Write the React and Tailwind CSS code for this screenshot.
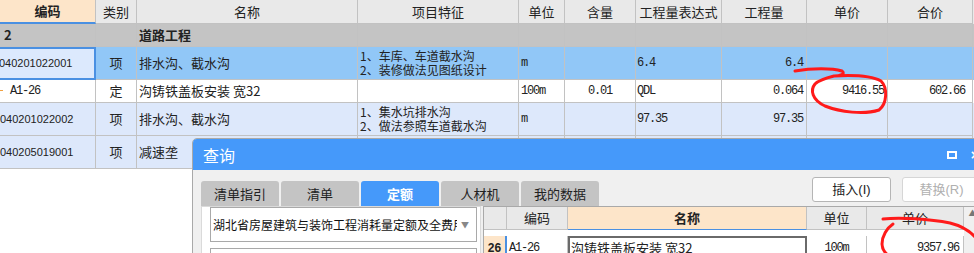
import React from 'react';

const cn = "font-['Noto_Sans_CJK_SC',sans-serif]";
const mono = "font-['Liberation_Mono',monospace] text-[12px] tracking-[-1.2px]";
const line = 'border-r border-b border-[#c2c2c2]';
const cols = 'grid grid-cols-[96px_41px_221px_161px_46px_71px_86px_85px_81px_85px]';

const Cell = ({ className = '', children }) => (
  <div className={`${line} flex items-center overflow-hidden whitespace-nowrap ${className}`}>{children}</div>
);

const headers = ['类别', '名称', '项目特征', '单位', '含量', '工程量表达式', '工程量', '单价', '合价'];

// 主表格
const MainGrid = () => (
  <div className={`${cn} text-[12px] text-[#222]`}>
    <div className={`${cols} h-[24px] bg-[#e9e9e9]`}>
      <Cell className="justify-center bg-[#fde5c9] font-bold text-[13px] border-b-2 border-b-[#4a90e2]">编码</Cell>
      {headers.map(h => (
        <Cell key={h} className="justify-center text-[13px]">{h}</Cell>
      ))}
    </div>

    <div className={`${cols} h-[23px] bg-[#c4c4c4] font-bold text-[13px]`}>
      <Cell className="pl-[4px]">2</Cell>
      <Cell />
      <Cell className="pl-[2px]">道路工程</Cell>
      <Cell /><Cell /><Cell /><Cell /><Cell /><Cell /><Cell />
    </div>

    <div className={`${cols} h-[33px] bg-[#91c7f7]`}>
      <div className="flex items-center bg-[#dce9fd] border-2 border-l-0 border-[#4a90e2] font-['Liberation_Sans',sans-serif] text-[11px] -ml-[1px]">040201022001</div>
      <Cell className="justify-center text-[13px]">项</Cell>
      <Cell className="pl-[2px] text-[13px]">排水沟、截水沟</Cell>
      <Cell className="pl-[2px] leading-[14px]">
        <div>1、车库、车道截水沟<br />2、装修做法见图纸设计</div>
      </Cell>
      <Cell className={`pl-[2px] ${mono}`}>m</Cell>
      <Cell />
      <Cell className={`pl-[1px] ${mono}`}>6.4</Cell>
      <Cell className={`justify-end pr-[3px] ${mono}`}>6.4</Cell>
      <Cell /><Cell />
    </div>

    <div className={`${cols} h-[23px] bg-white`}>
      <Cell className={`relative pl-[10px] ${mono}`}>
        <span className="absolute left-0 top-[10px] w-[3px] h-[1px] bg-[#f0a040]" />A1-26
      </Cell>
      <Cell className="justify-center text-[13px]">定</Cell>
      <Cell className="pl-[2px] text-[13px]">沟铸铁盖板安装 宽32</Cell>
      <Cell />
      <Cell className={`pl-[2px] ${mono}`}>100m</Cell>
      <Cell className={`justify-center ${mono}`}>0.01</Cell>
      <Cell className={`pl-[1px] ${mono}`}>QDL</Cell>
      <Cell className={`justify-end pr-[3px] ${mono}`}>0.064</Cell>
      <Cell className={`justify-end pr-[3px] ${mono}`}>9416.55</Cell>
      <Cell className={`justify-end pr-[7px] ${mono}`}>602.66</Cell>
    </div>

    <div className={`${cols} h-[33px] bg-[#dde8fb]`}>
      <Cell className="font-['Liberation_Sans',sans-serif] text-[11px]">040201022002</Cell>
      <Cell className="justify-center text-[13px]">项</Cell>
      <Cell className="pl-[2px] text-[13px]">排水沟、截水沟</Cell>
      <Cell className="pl-[2px] leading-[14px]">
        <div>1、集水坑排水沟<br />2、做法参照车道截水沟</div>
      </Cell>
      <Cell className={`pl-[2px] ${mono}`}>m</Cell>
      <Cell />
      <Cell className={`pl-[1px] ${mono}`}>97.35</Cell>
      <Cell className={`justify-end pr-[3px] ${mono}`}>97.35</Cell>
      <Cell /><Cell />
    </div>

    <div className={`${cols} h-[33px] bg-[#dde8fb]`}>
      <Cell className="font-['Liberation_Sans',sans-serif] text-[11px]">040205019001</Cell>
      <Cell className="justify-center text-[13px]">项</Cell>
      <Cell className="pl-[2px] text-[13px]">减速垄</Cell>
      <Cell /><Cell /><Cell /><Cell /><Cell /><Cell /><Cell />
    </div>
  </div>
);

const tabs = ['清单指引', '清单', '定额', '人材机', '我的数据'];

// 查询窗口
const QueryDialog = () => (
  <div className={`absolute left-[192px] top-[138px] w-[800px] h-[130px] border border-[#a9a9a9] rounded-tl-[5px] bg-[#f0f0f0] overflow-hidden ${cn}`}>
    <div className="h-[31px] bg-[#4599fa] flex items-center pl-[10px] text-white text-[16px]">
      <span>查询</span>
      <span className="ml-auto w-[10px] h-[8px] border-2 border-white" />
      <span className="ml-[14px] mr-[12px] text-[14px] font-['Liberation_Sans',sans-serif] font-bold leading-none">×</span>
    </div>

    <div className="flex pl-[8px] pr-[10px] h-[36px]">
      <div className="flex gap-[2px] mt-[11px]">
        {tabs.map(t => (
          <div
            key={t}
            className={`w-[78px] h-[25px] rounded-t-[3px] flex items-center justify-center text-[13px] ${t === '定额' ? 'bg-[#4599fa] text-white font-bold' : 'bg-[#c4c4c4] text-[#222]'}`}
          >
            {t}
          </div>
        ))}
      </div>
      <div className="ml-auto mt-[7px] flex gap-[11px] font-['Liberation_Sans',sans-serif]">
        <button className="w-[79px] h-[25px] bg-white border border-[#b5b5b5] rounded-[3px] text-[13px] text-[#222]">
          <span className={cn}>插入</span>(I)
        </button>
        <button className="w-[79px] h-[25px] bg-white border border-[#d6d6d6] rounded-[3px] text-[13px] text-[#b0b0b0]">
          <span className={cn}>替换</span>(R)
        </button>
      </div>
    </div>

    <div className="flex gap-[2px] pl-[8px]">
      <div className="w-[280px] h-[60px] bg-white border border-[#dadada] pl-[8px] pr-[3px]">
        <div className="h-[35px] border border-[#a9a9a9] flex items-center pl-[2px] pr-[7px] text-[12px] text-[#111]">
          <span className="overflow-hidden whitespace-nowrap flex-1">湖北省房屋建筑与装饰工程消耗量定额及全费用基价表</span>
          <span className="ml-[4px] text-[8px] text-[#888]">▼</span>
        </div>
        <div className="mt-[6px] h-[30px] border border-[#a9a9a9]" />
      </div>

      <div className="flex border-l border-t border-[#a9a9a9] bg-white">
        <div className="grid grid-cols-[23px_61px_239px_60px_97px] text-[13px] text-[#222]">
          <div className={`${line} h-[23px] bg-[#e9e9e9]`} />
          <div className={`${line} h-[23px] bg-[#e9e9e9] flex items-center justify-center`}>编码</div>
          <div className={`${line} h-[23px] bg-[#fde5c9] flex items-center justify-center font-bold border-b-[#4a90e2]`}>名称</div>
          <div className={`${line} h-[23px] bg-[#e9e9e9] flex items-center justify-center`}>单位</div>
          <div className={`${line} h-[23px] bg-[#e9e9e9] flex items-center justify-center`}>单价</div>

          <div className="h-[24px] bg-[#fde5c9] border-r-2 border-r-[#4a90e2] border-b border-b-[#c2c2c2] flex items-center justify-center text-[12px] font-bold font-['Liberation_Sans',sans-serif]">26</div>
          <div className={`${line} h-[24px] pl-[2px] flex items-center ${mono}`}>A1-26</div>
          <div className="h-[24px] border-2 border-[#6a6a6a] pl-[1px] flex items-center whitespace-nowrap">沟铸铁盖板安装 宽32</div>
          <div className={`${line} h-[24px] flex items-center justify-center ${mono}`}>100m</div>
          <div className={`${line} h-[24px] flex items-center justify-end pr-[4px] ${mono}`}>9357.96</div>
        </div>
        <div className="w-[17px] bg-[#f0f0f0] flex justify-center pt-[2px] text-[8px] text-[#777] leading-none">▲</div>
      </div>
    </div>
  </div>
);

// 手绘红圈标注
const RedMarks = () => (
  <svg className="absolute inset-0 pointer-events-none" width="974" height="253" viewBox="0 0 974 253">
    <g fill="none" stroke="#ff1a1a" strokeWidth="3" strokeLinecap="round" strokeLinejoin="round">
      <path d="M795 71 C812 68 832 68 842 71 C846 74 840 76 834 76 C852 75 872 76 881 81 C888 88 887 104 879 110 C864 115 840 112 825 106 C812 100 810 90 815 84 C819 80 826 78 834 76" />
      <path d="M883 219 C900 217 930 219 950 223 C962 226 970 231 976 238" />
      <path d="M893 224 C887 228 882 236 882 244 C882 250 885 253 889 256" />
    </g>
  </svg>
);

export default function App() {
  return (
    <div className="relative w-[974px] h-[253px] overflow-hidden bg-white">
      <MainGrid />
      <QueryDialog />
      <RedMarks />
    </div>
  );
}
